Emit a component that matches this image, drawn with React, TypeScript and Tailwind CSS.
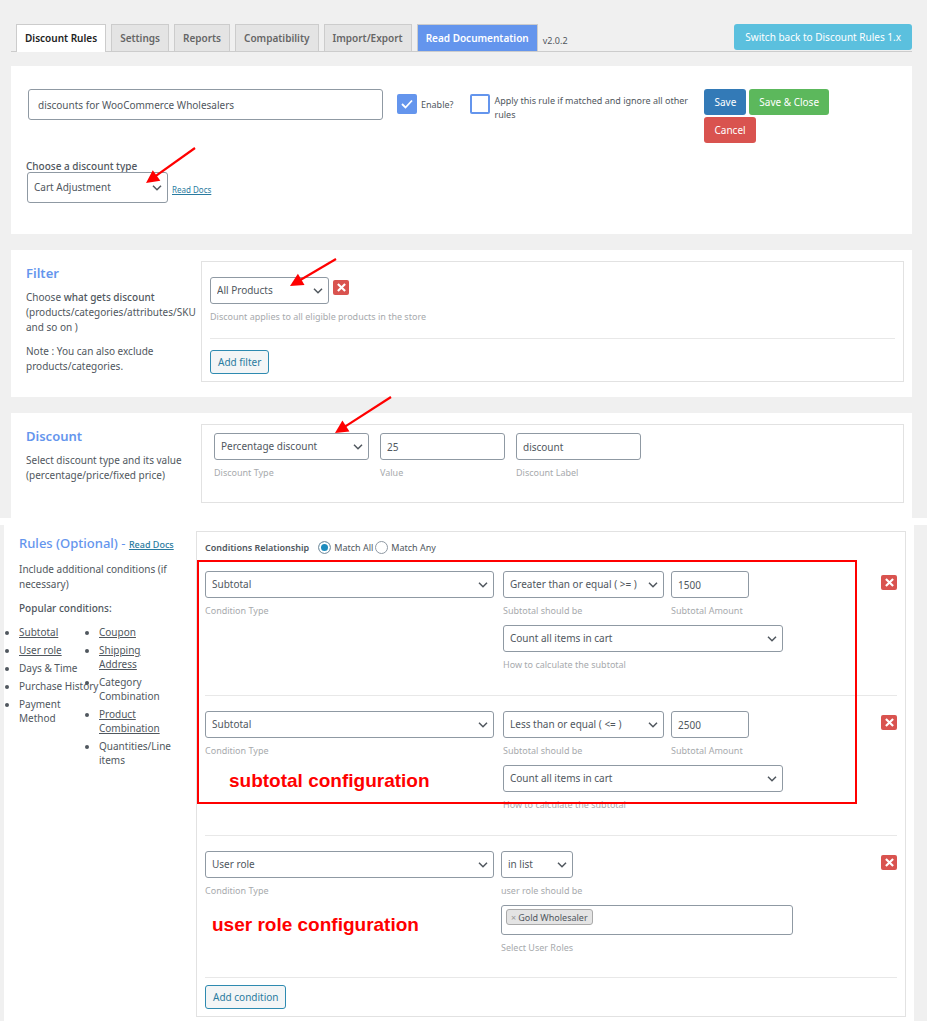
import { useState } from "react";
import type { ReactNode } from "react";

const field =
  "h-[27px] w-full rounded-[3px] border border-[#8f99a3] bg-white text-[10px] text-[#50575e]";

const tabs = ["Discount Rules", "Settings", "Reports", "Compatibility", "Import/Export"];

type SelectProps = {
  id: string;
  options: string[];
  tall?: boolean;
};

function Select({ id, options, tall }: SelectProps) {
  return (
    <div className="relative">
      <select id={id} className={`${field} appearance-none pl-[6px] pr-4 ${tall ? "h-[31px]" : ""}`}>
        {options.map((o) => (
          <option key={o}>{o}</option>
        ))}
      </select>
      <svg
        viewBox="0 0 10 6"
        className="pointer-events-none absolute right-[6px] top-1/2 h-[6px] w-[10px] -translate-y-1/2"
        fill="none"
        stroke="#50575e"
        strokeWidth="1.5"
      >
        <path d="M1 0.8 L5 4.8 L9 0.8" />
      </svg>
    </div>
  );
}

function Caption({ htmlFor, children }: { htmlFor?: string; children: ReactNode }) {
  return (
    <label htmlFor={htmlFor} className="mt-[6px] block whitespace-nowrap text-[9px] leading-[14px] text-[#a7aaad]">
      {children}
    </label>
  );
}

function RemoveButton() {
  return (
    <button
      aria-label="Remove"
      className="flex h-[15px] w-4 shrink-0 items-center justify-center rounded-[2px] bg-[#d9534f]"
    >
      <svg viewBox="0 0 10 10" className="size-[9px]" stroke="#fff" strokeWidth="2.4">
        <path d="M1 1 L9 9 M9 1 L1 9" />
      </svg>
    </button>
  );
}

function AddButton({ children }: { children: ReactNode }) {
  return (
    <button className="h-[24px] rounded-[3px] border border-[#2e8ab0] bg-[#f3f5f6] px-[7px] text-[10px] text-[#2a7ba0]">
      {children}
    </button>
  );
}

// dx/dy run from the tip (bottom left) up to the tail (top right)
function Arrow({ dx, dy, className }: { dx: number; dy: number; className: string }) {
  const angle = (Math.atan2(-dy, dx) * 180) / Math.PI;
  const length = Math.hypot(dx, dy);

  return (
    <svg width={dx} height={dy} className={`pointer-events-none absolute overflow-visible ${className}`}>
      <g transform={`translate(0 ${dy}) rotate(${angle})`}>
        <path d={`M10 0 H${length}`} stroke="#f00" strokeWidth="2.2" />
        <path d="M0 0 L13 -6.5 V6.5 Z" fill="#f00" />
      </g>
    </svg>
  );
}

function Condition({ id, operator, amount }: { id: string; operator: string; amount: string }) {
  return (
    <div className="flex h-[140px] items-start border-b border-[#e8e8e8] pt-[15px]">
      <div className="w-[289px] shrink-0">
        <Select id={`${id}-type`} options={["Subtotal", "User role"]} />
        <Caption htmlFor={`${id}-type`}>Condition Type</Caption>
      </div>
      <div className="ml-[9px] w-[280px]">
        <div className="flex gap-[7px]">
          <div className="w-[161px]">
            <Select id={`${id}-operator`} options={[operator]} />
            <Caption htmlFor={`${id}-operator`}>Subtotal should be</Caption>
          </div>
          <div className="w-[78px]">
            <input id={`${id}-amount`} defaultValue={amount} className={`${field} px-[6px]`} />
            <Caption htmlFor={`${id}-amount`}>Subtotal Amount</Caption>
          </div>
        </div>
        <div className="mt-[7px]">
          <Select id={`${id}-count`} options={["Count all items in cart"]} />
          <Caption htmlFor={`${id}-count`}>How to calculate the subtotal</Caption>
        </div>
      </div>
      <div className="ml-auto pt-1">
        <RemoveButton />
      </div>
    </div>
  );
}

export default function App() {
  const [title, setTitle] = useState("discounts for WooCommerce Wholesalers");
  const [match, setMatch] = useState("all");

  return (
    <div className="min-h-screen bg-white font-['Noto_Sans','Open_Sans',sans-serif] text-[10px] leading-[15px] text-[#50575e]">
      <div className="bg-[#f0f0f0] pl-[11px] pr-[15px] pt-6">
        <nav className="flex h-7 border-b border-[#ccc] pl-[5px]">
          {tabs.map((tab, i) => (
            <a
              key={tab}
              href="#"
              className={
                i === 0
                  ? "-mb-px mr-[5px] border border-b-0 border-[#ccc] bg-white px-2 pt-[6px] font-semibold text-[#222]"
                  : "mr-[5px] border border-b-0 border-[#ccc] bg-[#e4e4e4] px-2 pt-[6px] font-semibold text-[#666]"
              }
            >
              {tab}
            </a>
          ))}
          <a href="#" className="border border-b-0 border-[#ccc] bg-[#6495ed] px-2 pt-[6px] font-semibold text-white">
            Read Documentation
          </a>
          <span className="ml-[5px] pt-[9px] text-[9px]">v2.0.2</span>
          <button className="ml-auto h-[26px] rounded-[3px] bg-[#5bc0de] px-[11px] text-[10px] text-white">
            Switch back to Discount Rules 1.x
          </button>
        </nav>

        <section className="relative mt-[14px] h-[168px] bg-white pl-[15px] pt-[23px]">
          <div className="flex items-start">
            <input
              aria-label="Rule title"
              value={title}
              onChange={(e) => setTitle(e.target.value)}
              className={`${field} ml-[2px] h-[31px] max-w-[355px] px-[9px]`}
            />
            <label className="ml-[14px] flex shrink-0 items-center gap-1 pt-[5px] text-[9px]">
              <span className="relative">
                <input
                  type="checkbox"
                  defaultChecked
                  className="peer block size-5 appearance-none rounded-[2px] border-2 border-[#6495ed] checked:bg-[#6495ed]"
                />
                <svg
                  viewBox="0 0 12 10"
                  className="pointer-events-none absolute left-1 top-[5px] hidden h-[10px] w-3 peer-checked:block"
                  fill="none"
                  stroke="#fff"
                  strokeWidth="1.8"
                >
                  <path d="M1 5 L4.5 8.5 L11 1.5" />
                </svg>
              </span>
              Enable?
            </label>
            <label className="ml-[17px] flex w-[227px] shrink-0 gap-1 pt-[5px] text-[9px] leading-[14px]">
              <input
                type="checkbox"
                className="size-5 shrink-0 appearance-none rounded-[2px] border-2 border-[#6495ed] checked:bg-[#6495ed]"
              />
              Apply this rule if matched and ignore all other rules
            </label>
            <div className="ml-[7px] flex w-[135px] flex-wrap gap-x-[3px] gap-y-[2px] text-white">
              <button className="h-[26px] rounded-[3px] bg-[#337ab7] px-[10px]">Save</button>
              <button className="h-[26px] rounded-[3px] bg-[#5cb85c] px-[10px]">Save &amp; Close</button>
              <button className="h-[26px] rounded-[3px] bg-[#d9534f] px-[10px]">Cancel</button>
            </div>
          </div>
          <label htmlFor="discount-type" className="mt-[17px] block font-medium leading-[12px]">
            Choose a discount type
          </label>
          <div className="ml-px flex items-center gap-1">
            <div className="w-[141px]">
              <Select id="discount-type" options={["Cart Adjustment"]} tall />
            </div>
            <a href="#" className="pt-1 text-[8px] text-[#2a7ba0] underline">
              Read Docs
            </a>
          </div>
          <Arrow dx={49} dy={35} className="left-[135px] top-[82px]" />
        </section>

        <section className="relative mt-4 flex bg-white pb-[15px] pl-[15px] pr-2 pt-[11px]">
          <div className="w-[175px] shrink-0 pr-1">
            <h2 className="mb-[5px] text-[13px] font-semibold leading-6 text-[#6495ed]">Filter</h2>
            <p>
              Choose <b className="font-medium">what gets discount</b> (products/categories/attributes/SKU and so on )
            </p>
            <p className="mt-[9px]">Note : You can also exclude products/categories.</p>
          </div>
          <div className="min-w-0 flex-1 border border-[#e2e2e2] px-2 pb-[7px] pt-[15px]">
            <div className="flex items-start gap-1">
              <div className="w-[119px]">
                <Select id="filter" options={["All Products"]} />
              </div>
              <div className="pt-[3px]">
                <RemoveButton />
              </div>
            </div>
            <Caption htmlFor="filter">Discount applies to all eligible products in the store</Caption>
            <hr className="mb-[11px] mt-[14px] border-[#e8e8e8]" />
            <AddButton>Add filter</AddButton>
          </div>
          <Arrow dx={46} dy={27} className="left-[279px] top-[9px]" />
        </section>

        <section className="relative mt-4 flex bg-white pb-[15px] pl-[15px] pr-2 pt-[11px]">
          <div className="w-[175px] shrink-0 pr-1">
            <h2 className="mb-[5px] text-[13px] font-semibold leading-6 text-[#6495ed]">Discount</h2>
            <p>Select discount type and its value (percentage/price/fixed price)</p>
          </div>
          <div className="flex min-w-0 flex-1 gap-[11px] border border-[#e2e2e2] px-3 pb-[22px] pt-2">
            <div className="w-[155px]">
              <Select id="kind" options={["Percentage discount"]} />
              <Caption htmlFor="kind">Discount Type</Caption>
            </div>
            <div className="w-[125px]">
              <input id="value" defaultValue="25" className={`${field} px-[6px]`} />
              <Caption htmlFor="value">Value</Caption>
            </div>
            <div className="w-[125px]">
              <input id="label" defaultValue="discount" className={`${field} px-[6px]`} />
              <Caption htmlFor="label">Discount Label</Caption>
            </div>
          </div>
          <Arrow dx={56} dy={36} className="left-[324px] top-[-16px]" />
        </section>
      </div>

      <div className="mt-[7px] border-l-4 border-r-[13px] border-[#f0f0f0]">
        <section className="relative flex pb-1 pl-[15px] pr-2 pt-[6px]">
          <div className="w-[177px] shrink-0">
            <h2 className="mb-[5px] text-[13px] leading-6 text-[#6495ed]">
              <span className="font-medium">Rules (Optional)</span> -{" "}
              <a href="#" className="text-[9px] font-medium text-[#2a7ba0] underline">
                Read Docs
              </a>
            </h2>
            <p className="pr-5">Include additional conditions (if necessary)</p>
            <p className="mt-[9px] font-medium">Popular conditions:</p>
            <div className="mt-[9px] flex leading-[14px]">
              <ul className="w-20 list-outside list-disc space-y-1">
                <li><a href="#" className="underline">Subtotal</a></li>
                <li><a href="#" className="underline">User role</a></li>
                <li>Days &amp; Time</li>
                <li className="whitespace-nowrap">Purchase History</li>
                <li>Payment<br />Method</li>
              </ul>
              <ul className="w-20 list-outside list-disc space-y-1">
                <li><a href="#" className="underline">Coupon</a></li>
                <li><a href="#" className="underline">Shipping<br />Address</a></li>
                <li>Category Combination</li>
                <li><a href="#" className="underline">Product Combination</a></li>
                <li>Quantities/Line items</li>
              </ul>
            </div>
          </div>

          <div className="min-w-0 flex-1 border border-[#e2e2e2] px-2 pb-[7px]">
            <div className="flex h-6 items-center pt-[6px] text-[9px]">
              <span className="mr-[9px] font-semibold">Conditions Relationship</span>
              <label className="flex items-center gap-[3px]">
                <input
                  type="radio"
                  name="match"
                  checked={match === "all"}
                  onChange={() => setMatch("all")}
                  className="size-[13px] appearance-none rounded-full border border-[#8f99a3] shadow-[inset_0_0_0_2px_white] checked:bg-[#1e8cbe]"
                />
                Match All
              </label>
              <label className="ml-[2px] flex items-center gap-[3px]">
                <input
                  type="radio"
                  name="match"
                  checked={match === "any"}
                  onChange={() => setMatch("any")}
                  className="size-[13px] appearance-none rounded-full border border-[#8f99a3] shadow-[inset_0_0_0_2px_white] checked:bg-[#1e8cbe]"
                />
                Match Any
              </label>
            </div>

            <Condition id="first" operator="Greater than or equal ( >= )" amount="1500" />
            <Condition id="second" operator="Less than or equal ( <= )" amount="2500" />

            <div className="flex h-[142px] items-start border-b border-[#e8e8e8] pt-[15px]">
              <div className="w-[289px] shrink-0">
                <Select id="role-type" options={["User role", "Subtotal"]} />
                <Caption htmlFor="role-type">Condition Type</Caption>
              </div>
              <div className="ml-[7px] w-[292px]">
                <div className="w-[72px]">
                  <Select id="role-operator" options={["in list"]} />
                  <Caption htmlFor="role-operator">user role should be</Caption>
                </div>
                <div className="mt-[7px] h-[30px] rounded-[3px] border border-[#8f99a3] px-1 pt-[3px]">
                  <span className="flex h-4 w-fit items-center gap-[2px] rounded-[3px] border border-[#aaa] bg-[#e4e4e4] px-1 text-[9px]">
                    <button className="text-[#999]">×</button>Gold Wholesaler
                  </span>
                </div>
                <Caption>Select User Roles</Caption>
              </div>
              <div className="ml-auto pt-1">
                <RemoveButton />
              </div>
            </div>
            <div className="pt-[7px]">
              <AddButton>Add condition</AddButton>
            </div>
          </div>

          <div className="pointer-events-none absolute left-[193px] top-[35px] h-[244px] w-[660px] border-2 border-[#f00] pl-[30px] pt-[207px] font-['Liberation_Sans',Arial,sans-serif] text-[19px] font-bold leading-6 text-[#f00]">
            subtotal configuration
          </div>
          <div className="pointer-events-none absolute left-[208px] top-[388px] font-['Liberation_Sans',Arial,sans-serif] text-[19px] font-bold leading-6 text-[#f00]">
            user role configuration
          </div>
        </section>
      </div>
    </div>
  );
}
